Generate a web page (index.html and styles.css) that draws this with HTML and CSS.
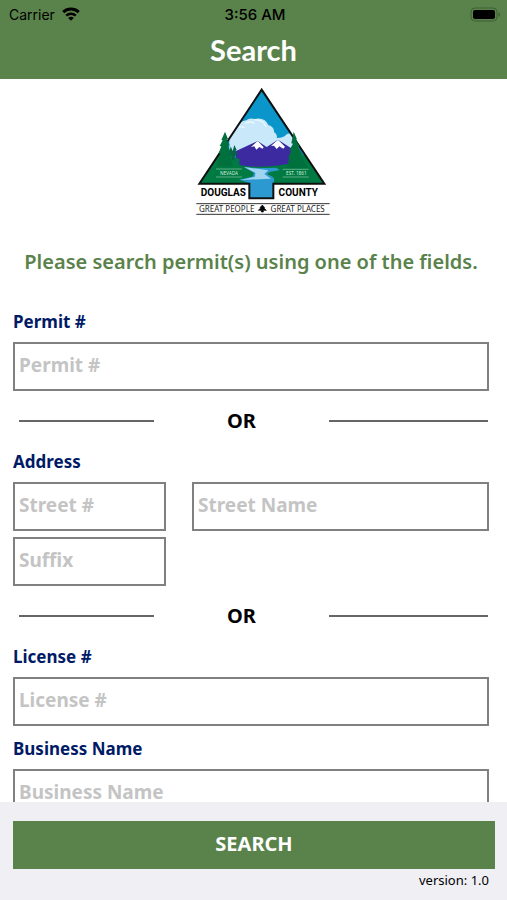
FILE: index.html
```html
<!DOCTYPE html>
<html lang="en">
<head>
  <meta charset="UTF-8">
  <meta name="viewport" content="width=device-width, initial-scale=1.0">
  <title>Search</title>
  <link rel="stylesheet" href="styles.css">
</head>
<body>
  <header class="header">
    <div class="status-bar">
      <div class="carrier">
        <span>Carrier</span>
        <svg class="wifi" viewBox="0 0 18 14" aria-hidden="true">
          <path d="M1.200 5.200a11.400 11.400 0 0 1 15.600 0" fill="none" stroke="#000" stroke-width="3"/>
          <path d="M4.200 8.600a7.100 7.100 0 0 1 9.600 0" fill="none" stroke="#000" stroke-width="2.400"/>
          <path d="M6.200 11a4 4 0 0 1 5.600 0L9 13.800z"/>
        </svg>
      </div>
      <span class="time">3:56 AM</span>
      <svg class="battery" viewBox="0 0 31 15" aria-hidden="true">
        <rect x="1" y="1" width="26" height="13" rx="4" fill="none" stroke="#3f5f36" stroke-width="1"/>
        <rect x="3" y="3" width="22" height="9" rx="2"/>
        <path d="M28.500 5c2 .8 2 4.200 0 5z" fill="#3f5f36"/>
      </svg>
    </div>
    <h1>Search</h1>
  </header>

  <main class="content">
    <div class="logo">
      <svg viewBox="20 21 405 390" role="img" aria-label="Douglas County">
        <defs>
          <clipPath id="peak"><path d="M217 29L405 311H252V355H180V311H30z"/></clipPath>
        </defs>
        <g clip-path="url(#peak)">
          <rect x="20" y="20" width="400" height="340" fill="#0a96cb"/>
          <path d="M120 215V152q8-14 26-11 5-18 25-20 8-8 25-4 30-6 41 18 18 6 17 21 12 8 8 18 24-2 28-10 14-8 26 4v60z" fill="#c9e9fb"/>
          <path d="M128 151q16-17 38-8M168 130q15-8 27 0M194 120q28-2 36 20" fill="none" stroke="#eaf8ff" stroke-width="4"/>
          <path d="M140 213L205 183l27 18 34-22 54 35v48H140z" fill="#3c2ba0"/>
          <path d="M205 183l-20 18 10-2 6 10 9-8 9 5 4-4zM266 179l-21 19 9-1 8 10 8-8 12 7 5-6z" fill="#fff"/>
          <path d="M20 320V250L90 214l24 0 20 16 16 7v18q60 12 145-3l15-45 120 70v64z" fill="#007a43"/>
          <path d="M164 261q42 5 97 2l10 8q-45 5-35 13 27 7 15 27v46h-72v-48l-30-10 39-9q10-9 2-13z" fill="#2c9ad0"/>
          <path d="M164 261l73 10-12 11 20 14-92 4 44-10 1-12z" fill="#a1d4f1"/>
        </g>
        <path d="M217 29L405 311H252V355H180V311H30z" fill="none" stroke="#101010" stroke-width="6"/>
        <path d="M107 155l9 22-4 1 9 18-5 1 8 20-5 2 12 40H80l14-38-6-1 8-21-5-1 9-17-4-1z" fill="#00703d"/>
        <path d="M124 199l6 14 5-18 7 15-3 2 5 13-8 4v12h-8v-14l-9-2z" fill="#086446"/>
        <path d="M313 155l10 23-4 1 12 20-5 2 14 23-6 2 22 38h-66l12-28-6-2 10-21-6-2 11-20-5-1z" fill="#00703d"/>
        <path d="M80 267h78M80 291h78M280 268h78M280 291h78" stroke="#8fc5a8" stroke-width="2"/>
        <g class="logo-small">
          <text x="119" y="286">NEVADA</text>
          <text x="321" y="286">EST. 1861</text>
        </g>
        <g class="logo-name">
          <text x="102" y="347">DOUGLAS</text>
          <text x="327" y="347">COUNTY</text>
        </g>
        <path d="M21 371h400M21 403h400" stroke="#333" stroke-width="3"/>
        <g class="logo-tagline">
          <text x="112" y="395">GREAT PEOPLE</text>
          <text x="325" y="395">GREAT PLACES</text>
        </g>
        <path d="M219 375l7 8h-3l8 8h-9v5h-6v-5h-9l8-8h-3z" stroke="#000" stroke-width="2"/>
      </svg>
    </div>

    <h2>Please search permit(s) using one of the fields.</h2>

    <form id="searchForm">
      <div class="field">
        <label for="permit">Permit #</label>
        <input type="text" id="permit" placeholder="Permit #">
      </div>

      <div class="divider"><span>OR</span></div>

      <div class="field">
        <label for="streetNumber">Address</label>
        <div class="address">
          <input type="text" id="streetNumber" placeholder="Street #">
          <input type="text" id="streetName" placeholder="Street Name" aria-label="Street Name">
          <input type="text" id="suffix" placeholder="Suffix" aria-label="Suffix">
        </div>
      </div>

      <div class="divider"><span>OR</span></div>

      <div class="field">
        <label for="license">License #</label>
        <input type="text" id="license" placeholder="License #">
      </div>

      <div class="field">
        <label for="business">Business Name</label>
        <input type="text" id="business" placeholder="Business Name">
      </div>
    </form>
  </main>

  <footer class="footer">
    <button type="submit" form="searchForm">SEARCH</button>
    <p>version: 1.0</p>
  </footer>
</body>
</html>
```

FILE: styles.css
```css
* {
  box-sizing: border-box;
}

body {
  display: flex;
  flex-direction: column;
  height: 100vh;
  margin: 0;
  font-family: "Noto Sans", "Open Sans", sans-serif;
  background-color: #fff;
  color: #000;
}

.header {
  flex: none;
  padding-bottom: 12px;
  background-color: #5a824b;
}

.status-bar {
  display: grid;
  grid-template-columns: 1fr auto 1fr;
  align-items: center;
  height: 28px;
  padding: 0 6px 0 9px;
  font-family: Inter, sans-serif;
  font-size: 14px;
}

.carrier {
  display: flex;
  align-items: center;
  gap: 7px;
}

.wifi {
  width: 18px;
  height: 14px;
}

.time {
  font-size: 15px;
  font-weight: 500;
}

.battery {
  justify-self: end;
  width: 31px;
  height: 15px;
}

h1 {
  margin: 4px 0 0;
  font-family: Lato, sans-serif;
  font-size: 29px;
  font-weight: 700;
  line-height: 35px;
  text-align: center;
  color: #fff;
}

.content {
  flex: 1;
  min-height: 0;
  padding: 8px 18px 20px 13px;
  overflow-y: auto;
  scrollbar-width: none;
}

.logo {
  padding-left: 25px;
  text-align: center;
}

.logo svg {
  display: inline-block;
  width: 135px;
  height: 130px;
  vertical-align: top;
}

.logo text {
  text-anchor: middle;
}

.logo-small {
  font-size: 14px;
  fill: #d5eadd;
}

.logo-name {
  font-family: Roboto, sans-serif;
  font-size: 30px;
  font-weight: 700;
}

.logo-tagline {
  font-size: 24px;
  fill: #222;
}

h2 {
  margin: 31px 0 34px;
  font-size: 20px;
  font-weight: 600;
  line-height: 28px;
  text-align: center;
  color: #5a824b;
}

.field + .field {
  margin-top: 11px;
}

label {
  display: block;
  margin-bottom: 8px;
  font-size: 17px;
  font-weight: 700;
  line-height: 24px;
  color: #001a66;
}

input {
  display: block;
  width: 100%;
  height: 49px;
  padding: 0 4px 4px;
  border: 2px solid #808080;
  border-radius: 0;
  background-color: #fff;
  font-family: inherit;
  font-size: 19px;
  font-weight: 700;
}

input::placeholder {
  color: #c4c4c4;
  opacity: 1;
}

.address {
  display: grid;
  grid-template-columns: 153fr 297fr;
  gap: 6px 26px;
}

.divider {
  display: grid;
  grid-template-columns: 135fr 175fr 159fr;
  align-items: center;
  height: 59px;
  padding: 0 1px 0 6px;
  font-size: 20px;
  font-weight: 700;
  text-align: center;
}

.divider::before,
.divider::after {
  content: "";
  height: 2px;
  background-color: #666;
}

.footer {
  flex: none;
  padding: 19px 12px 10px 13px;
  background-color: #efeff4;
}

button {
  display: block;
  width: 100%;
  height: 48px;
  padding: 0 0 4px;
  border: none;
  background-color: #5a824b;
  font-family: inherit;
  font-size: 20px;
  font-weight: 700;
  color: #fff;
}

.footer p {
  margin: 1px 6px 0 0;
  font-size: 13px;
  line-height: 20px;
  text-align: right;
}
```
